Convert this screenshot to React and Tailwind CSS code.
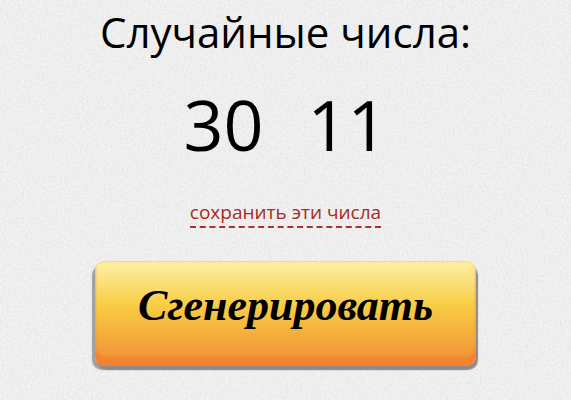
import React, { useState } from "react";

const randomNumber = () => Math.floor(Math.random() * 50) + 1;

const PaperTexture = () => (
  <svg
    className="absolute inset-0 -z-10 h-full w-full"
    aria-hidden="true"
  >
    <filter id="grain" colorInterpolationFilters="sRGB">
      <feTurbulence
        type="fractalNoise"
        baseFrequency="0.45"
        numOctaves="2"
        seed="4"
      />
      <feColorMatrix
        type="matrix"
        values="0.08 0 0 0 0.893  0.08 0 0 0 0.893  0.08 0 0 0 0.893  0 0 0 0 1"
      />
    </filter>
    <rect width="100%" height="100%" filter="url(#grain)" />
  </svg>
);

const GenerateButton = ({ onClick }) => (
  <button
    type="button"
    onClick={onClick}
    className="mt-[33px] h-[105px] w-2/3 cursor-pointer rounded-[10px] bg-linear-to-b from-[#fdf0a4] via-[#f8cf45] via-40% to-[#f09836] to-90% pb-4 font-['Liberation_Serif',serif] text-[44px] font-bold italic text-black shadow-[inset_0_-9px_3px_#f4822f,inset_0_1px_1px_#f8dc60,2px_4px_1px_#8f8b88,-3px_4px_1px_#a39f9c] active:brightness-95"
  >
    Сгенерировать
  </button>
);

const App = () => {
  const [numbers, setNumbers] = useState([30, 11]);
  const [saved, setSaved] = useState([]);

  const handleGenerate = () => {
    setNumbers([randomNumber(), randomNumber()]);
  };

  const handleSave = (e) => {
    e.preventDefault();
    setSaved([...saved, numbers]);
  };

  return (
    <main className="relative isolate flex min-h-screen flex-col items-center bg-[#eeeeee] pt-1.5 font-['Open_Sans',sans-serif] text-black">
      <PaperTexture />
      <h1 className="text-[42px] leading-[52px]">Случайные числа:</h1>
      <div className="mt-6 flex gap-11 text-[70px] leading-[84px]">
        {numbers.map((number, i) => (
          <span key={i}>{number}</span>
        ))}
      </div>
      <a
        href="#save"
        onClick={handleSave}
        className="mt-8 border-b-2 border-dashed border-[#a8322c] text-[19px] leading-7 text-[#a82a1e]"
      >
        сохранить эти числа
      </a>
      <GenerateButton onClick={handleGenerate} />
    </main>
  );
};

export default App;
